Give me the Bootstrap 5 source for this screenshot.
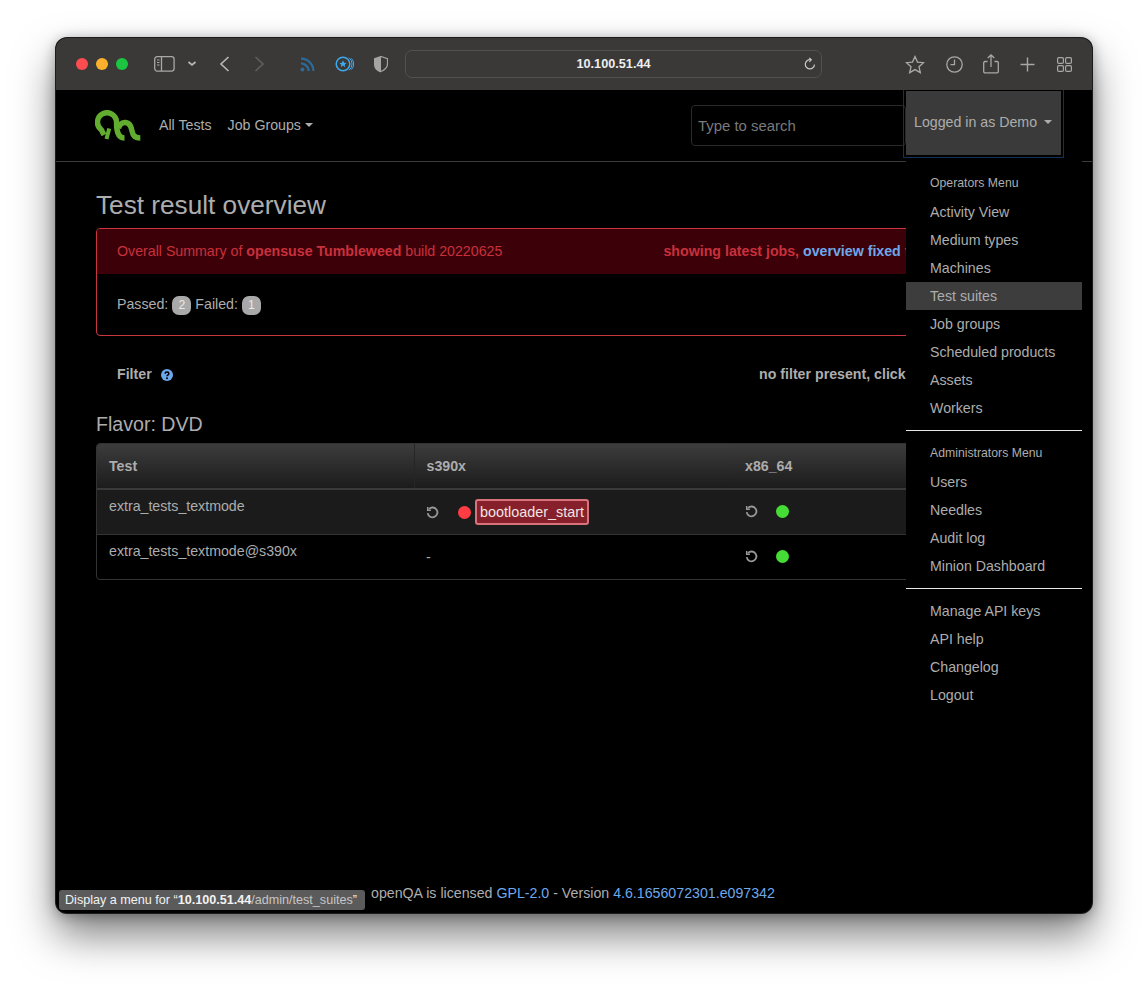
<!DOCTYPE html>
<html lang="en">
<head>
<meta charset="utf-8">
<title>openQA</title>
<link href="https://cdn.jsdelivr.net/npm/bootstrap@5.3.0/dist/css/bootstrap.min.css" rel="stylesheet">
<style>
html,body{background:#fff;height:987px;overflow:hidden}
body{font-family:"Liberation Sans",Arial,sans-serif;font-size:14.2px;color:#adadad;padding:38px 56px 0}
.wnd{width:1036px;height:875px;background:#000;border-radius:11px;box-shadow:0 0 0 1px #1c1c1c,0 22px 42px rgba(0,0,0,.5),0 2px 14px rgba(0,0,0,.35);overflow:hidden;position:relative}
.tbar{height:52px;background:#3a3937;padding-left:20px;position:relative;z-index:7}
.tbar svg{display:block;flex:none}
.dot{width:12px;height:12px;border-radius:50%;margin-right:8px;flex:none}
.urlbox{width:417px;height:28px;border:1px solid #525150;border-radius:7px;color:#eee;font-size:12.7px;font-weight:700;position:relative;margin-left:17px;padding-top:2px}
.urlbox svg{position:absolute;right:4px;top:6px}
.topnav{height:72px;border-bottom:1px solid #3a3a3a;padding:0 0 0 39px;position:relative}
.topnav a{color:#adadad;text-decoration:none}
.caret-dn{display:inline-block;margin-left:4px;vertical-align:3px;border-top:4px solid;border-left:4px solid transparent;border-right:4px solid transparent}
.navlinks{gap:16px;margin-left:18px;margin-top:0}
.findbox{position:absolute;left:635px;top:15px;width:215px;height:41px;background:#000;border:1px solid #2a2a2a;border-radius:4px;color:#adadad;font-size:14.9px;padding:0 6px;margin:0}
.findbox::placeholder{color:#7a7a7a;opacity:1}
.findbox:focus{background:#000;color:#adadad;box-shadow:none;border-color:#2a2a2a}
.userbtn{position:absolute;left:850px;top:1px;width:155px;height:64px;background:#3a3a3a;border:0;outline:1px solid #12305c;outline-offset:2px;color:#adadad;padding:0 0 0 8px;font-size:14.2px;text-align:left;z-index:5;border-radius:0}
.userbtn:hover,.userbtn:active{background:#3a3a3a;color:#adadad}
.userbtn .caret-dn{margin-left:7px}
.menubox{position:absolute;left:850px;top:122px;width:176px;background:#000;color:#adadad;border:0;border-radius:0;padding:9px 0 8px;margin:0;z-index:4;font-size:14.2px}
.menubox .dropdown-header{color:#adadad;font-size:12.25px;padding:7px 24px 7px;line-height:15px}
.menubox .dropdown-item{color:#adadad;padding:0 24px;line-height:28px;height:28px}
.menubox .dropdown-item.active,.menubox .dropdown-item:hover{background:#3d3d3d;color:#adadad}
.menubox .dropdown-divider{border-top:1px solid #e8e8e8;opacity:1;margin:8px 0}
.pagebody{padding:0 40px}
.pagehead{font-family:"Liberation Sans",Arial,sans-serif;font-size:26.2px;color:#adadad;font-weight:400;line-height:31px;margin:28px 0 7px}
.sumcard{background:#000;border:1px solid #c8363f;border-radius:4px;height:108px;color:#adadad}
.sumhead{background:#3c0008;height:45px;padding:0 17px 0 20px;color:#c9303c;border-radius:3px 3px 0 0}
.sumhead a{color:#6ea8ec;text-decoration:none;font-weight:700}
.sumbody{padding:20px}
.cntpill{background:#a9a9a9;color:#e8e8e8;font-weight:400;font-size:12.25px;padding:3px 6.2px;border-radius:7px;line-height:13px;display:inline-block}
.filterrow{height:36px;margin-top:21px;padding-left:21px;font-weight:700}
.filterrow .qmark{margin-left:9px}
.filterright{position:absolute;left:703px;font-weight:700}
.flavorhd{font-size:19.6px;font-weight:400;color:#adadad;line-height:24px;margin:19px 0 7px}
.tblwrap{border:1px solid #333;border-radius:4px;overflow:hidden}
.restable{width:100%;border-collapse:collapse;color:#adadad}
.restable th{height:45px;background:linear-gradient(#3c3c3c,#1c1c1c);padding:2px 12px 0;font-weight:700;border-bottom:2px solid #3a3a3a}
.restable td{height:45px;padding:6px 12px 0;vertical-align:top;border-top:1px solid #333}
.restable tr:first-child td{border-top:0}
.restable tr.oddrow td{background:#1b1b1b}
.restable th.namecol{width:317px;border-right:1px solid #262626}
.restable th.archcol{width:319px}
.statline{margin-top:3px}
.st-dot{width:13px;height:13px;border-radius:50%;display:inline-block;flex:none}
.st-bad{background:#ff3b44}
.st-ok{background:#45dc35}
.failmod{background:#86202a;border:2px solid #d9737b;border-radius:3px;color:#f0e4e4;padding:0 3px;line-height:22px;height:26px;margin-left:4px;font-size:14.4px}
.footline{position:absolute;left:315px;top:845px;color:#adadad;white-space:nowrap}
.footline a{color:#6ea8ec;text-decoration:none}
.statusbar{position:absolute;left:3px;bottom:3px;height:20px;width:306px;background:#5b5b5b;border-radius:3px;color:#f2f2f2;font-size:12.6px;line-height:20px;padding-left:6px;z-index:6;white-space:nowrap}
.statusbar b{font-weight:700}
.statusbar span{color:#c6c6c6}
</style>
</head>
<body>
<div class="wnd">
  <div class="tbar d-flex align-items-center">
    <span class="dot" style="background:#ff4c4f"></span>
    <span class="dot" style="background:#feb02d"></span>
    <span class="dot" style="background:#1cc541"></span>
    <svg width="21" height="16" viewBox="0 0 21 16" style="margin-left:18px" fill="none" stroke="#a8a8a6" stroke-width="1.3"><rect x=".7" y=".7" width="19.4" height="14.4" rx="2.5"/><path d="M7.5 .7v14.4"/><path d="M3 4h2.5M3 6.5h2.5M3 9h2.5" stroke-width="1.2"/></svg>
    <svg width="10" height="6" viewBox="0 0 10 6" style="margin-left:12px" fill="none" stroke="#b8b8b6" stroke-width="1.7"><path d="M1.5 1l3.5 3 3.500-3"/></svg>
    <svg width="11" height="16" viewBox="0 0 11 16" style="margin-left:22px" fill="none" stroke="#b4b4b2" stroke-width="1.7"><path d="M9.500 1L2 8l7.500 7"/></svg>
    <svg width="11" height="16" viewBox="0 0 11 16" style="margin-left:24px" fill="none" stroke="#5e5e5c" stroke-width="1.7"><path d="M1.500 1L9 8l-7.500 7"/></svg>
    <svg width="15" height="15" viewBox="0 0 14 14" style="margin-left:35px" fill="none" stroke="#2c6c9c" stroke-width="2"><path d="M1 6a7 7 0 0 1 7 7"/><path d="M1 1.500A11.500 11.500 0 0 1 12.500 13"/><circle cx="2.300" cy="11.700" r="1.800" fill="#2c6c9c" stroke="none"/></svg>
    <svg width="20" height="16" viewBox="0 0 20 16" style="margin-left:20px" fill="none" stroke="#3fa9f0"><circle cx="8" cy="8" r="6.800" stroke-width="1.500"/><path d="M14 1.700a8 8 0 0 1 0 12.600M16.500 2.500a8 8 0 0 1 0 11" stroke-width="1"/><path d="M8 4.300l1.100 2.400 2.500.3-1.900 1.700.5 2.500L8 9.500l-2.200 1.700.5-2.500L4.400 7l2.500-.3z" fill="#3fa9f0" stroke="none"/></svg>
    <svg width="14" height="17" viewBox="0 0 14 17" style="margin-left:19px"><path d="M7 .5l6.500 2.200v5c0 3.800-3 6.300-6.500 7.800C3.500 15 .5 12.500.5 7.700v-5z" fill="none" stroke="#a4a4a2" stroke-width="1.200"/><path d="M7 .5L.5 2.700v5C.5 12.500 3.500 15 7 16.500z" fill="#a4a4a2"/></svg>
    <div class="urlbox d-flex align-items-center justify-content-center">10.100.51.44
      <svg width="14" height="14" viewBox="0 0 14 14" fill="none" stroke="#c8c8c6" stroke-width="1.200"><path d="M11.500 7.500a4.600 4.600 0 1 1-3.600-4.700"/><path d="M6.300 .8l2 2-2 2"/></svg>
    </div>
    <svg width="20" height="19" viewBox="0 0 20 19" style="margin-left:83px" fill="none" stroke="#a8a8a6" stroke-width="1.300"><path d="M10 1.500l2.500 5.600 6 .6-4.500 4 1.300 5.900L10 14.600l-5.300 3 1.300-5.900-4.500-4 6-.6z"/></svg>
    <svg width="17" height="17" viewBox="0 0 17 17" style="margin-left:21px" fill="none" stroke="#a8a8a6" stroke-width="1.300"><circle cx="8.500" cy="8.500" r="7.700"/><path d="M8.500 3.500v5.200H4.500"/></svg>
    <svg width="16" height="20" viewBox="0 0 16 20" style="margin-left:20px" fill="none" stroke="#a8a8a6" stroke-width="1.300"><path d="M4.500 7.500H2a1.300 1.300 0 0 0-1.300 1.300v8.700A1.300 1.300 0 0 0 2 18.800h12a1.300 1.300 0 0 0 1.300-1.300V8.800A1.300 1.300 0 0 0 14 7.500h-2.500"/><path d="M8 13V1M4.700 4L8 1l3.300 3"/></svg>
    <svg width="15" height="15" viewBox="0 0 15 15" style="margin-left:21px" fill="none" stroke="#a8a8a6" stroke-width="1.400"><path d="M7.500 .5v14M.5 7.500h14"/></svg>
    <svg width="15" height="15" viewBox="0 0 15 15" style="margin-left:22px" fill="none" stroke="#a8a8a6" stroke-width="1.200"><rect x=".6" y=".6" width="5.800" height="5.800" rx="1.200"/><rect x="8.600" y=".6" width="5.800" height="5.800" rx="1.200"/><rect x=".6" y="8.600" width="5.800" height="5.800" rx="1.200"/><rect x="8.600" y="8.600" width="5.800" height="5.800" rx="1.200"/></svg>
  </div>

  <nav class="topnav d-flex align-items-center">
    <svg width="46" height="31" viewBox="0 0 46 31" fill="none" stroke="#62ad2f" stroke-width="5.400"><path d="M9 25L6.500 20A9.500 9.500 0 1 1 21.500 12c0 7 .5 16 8 16"/><path d="M14.200 18.500L11.500 29" stroke-width="4"/><path d="M23.500 18.500c1-4.500 4-6.300 7-6 5 .5 6 5 6.800 9.500.7 4 3 6 8 6"/></svg>
    <div class="navlinks d-flex">
      <a href="#">All Tests</a>
      <a href="#">Job Groups<span class="caret-dn"></span></a>
    </div>
    <input class="form-control findbox" type="text" placeholder="Type to search">
    <button class="btn userbtn" type="button">Logged in as Demo<span class="caret-dn"></span></button>
  </nav>

  <div class="dropdown-menu show menubox">
    <h6 class="dropdown-header">Operators Menu</h6>
    <a class="dropdown-item" href="#">Activity View</a>
    <a class="dropdown-item" href="#">Medium types</a>
    <a class="dropdown-item" href="#">Machines</a>
    <a class="dropdown-item active" href="#">Test suites</a>
    <a class="dropdown-item" href="#">Job groups</a>
    <a class="dropdown-item" href="#">Scheduled products</a>
    <a class="dropdown-item" href="#">Assets</a>
    <a class="dropdown-item" href="#">Workers</a>
    <div class="dropdown-divider"></div>
    <h6 class="dropdown-header">Administrators Menu</h6>
    <a class="dropdown-item" href="#">Users</a>
    <a class="dropdown-item" href="#">Needles</a>
    <a class="dropdown-item" href="#">Audit log</a>
    <a class="dropdown-item" href="#">Minion Dashboard</a>
    <div class="dropdown-divider"></div>
    <a class="dropdown-item" href="#">Manage API keys</a>
    <a class="dropdown-item" href="#">API help</a>
    <a class="dropdown-item" href="#">Changelog</a>
    <a class="dropdown-item" href="#">Logout</a>
  </div>

  <div class="pagebody">
    <h1 class="pagehead">Test result overview</h1>
    <div class="sumcard">
      <div class="sumhead d-flex align-items-center justify-content-between">
        <span>Overall Summary of <b>opensuse Tumbleweed</b> build 20220625</span>
        <span class="fw-bold text-nowrap">showing latest jobs, <a href="#">overview fixed</a> to the current build</span>
      </div>
      <div class="sumbody">Passed: <span class="cntpill">2</span> Failed: <span class="cntpill">1</span></div>
    </div>
    <div class="filterrow d-flex align-items-center">
      <span>Filter</span>
      <svg class="qmark" width="12" height="12" viewBox="0 0 12 12"><circle cx="6" cy="6" r="6" fill="#6ea8ec"/><path d="M4.200 4.800c0-2.300 3.600-2.300 3.600 0 0 1.300-1.800 1.200-1.800 2.400" fill="none" stroke="#000" stroke-width="1.500"/><circle cx="6" cy="9.200" r="1" fill="#000"/></svg>
      <span class="filterright">no filter present, click to toggle filter form</span>
    </div>
    <h2 class="flavorhd">Flavor: DVD</h2>
    <div class="tblwrap">
      <table class="restable">
        <thead><tr><th class="namecol">Test</th><th class="archcol">s390x</th><th>x86_64</th></tr></thead>
        <tbody>
          <tr class="oddrow">
            <td>extra_tests_textmode</td>
            <td>
              <div class="d-flex align-items-center statline">
                <svg width="13" height="13" viewBox="0 0 13 13" fill="none" stroke="#989898" stroke-width="1.800"><path d="M3 3a4.900 4.900 0 1 1-1.300 4.200"/><path d="M1.700 1v3.200h3.200" stroke-width="1.500"/></svg>
                <span class="st-dot st-bad" style="margin-left:19px"></span>
                <span class="failmod">bootloader_start</span>
              </div>
            </td>
            <td>
              <div class="d-flex align-items-center statline" style="height:24px">
                <svg width="13" height="13" viewBox="0 0 13 13" fill="none" stroke="#989898" stroke-width="1.800"><path d="M3 3a4.900 4.900 0 1 1-1.300 4.200"/><path d="M1.700 1v3.200h3.200" stroke-width="1.500"/></svg>
                <span class="st-dot st-ok" style="margin-left:18px"></span>
              </div>
            </td>
          </tr>
          <tr>
            <td>extra_tests_textmode@s390x</td>
            <td><div class="statline" style="line-height:26px">-</div></td>
            <td>
              <div class="d-flex align-items-center statline" style="height:26px">
                <svg width="13" height="13" viewBox="0 0 13 13" fill="none" stroke="#989898" stroke-width="1.800"><path d="M3 3a4.900 4.900 0 1 1-1.300 4.200"/><path d="M1.700 1v3.200h3.200" stroke-width="1.500"/></svg>
                <span class="st-dot st-ok" style="margin-left:18px"></span>
              </div>
            </td>
          </tr>
        </tbody>
      </table>
    </div>
  </div>

  <div class="footline">openQA is licensed <a href="#">GPL-2.0</a> - Version <a href="#">4.6.1656072301.e097342</a></div>
  <div class="statusbar">Display a menu for “<b>10.100.51.44</b><span>/admin/test_suites</span>”</div>
</div>
<script src="https://cdn.jsdelivr.net/npm/bootstrap@5.3.0/dist/js/bootstrap.bundle.min.js"></script>
</body>
</html>
